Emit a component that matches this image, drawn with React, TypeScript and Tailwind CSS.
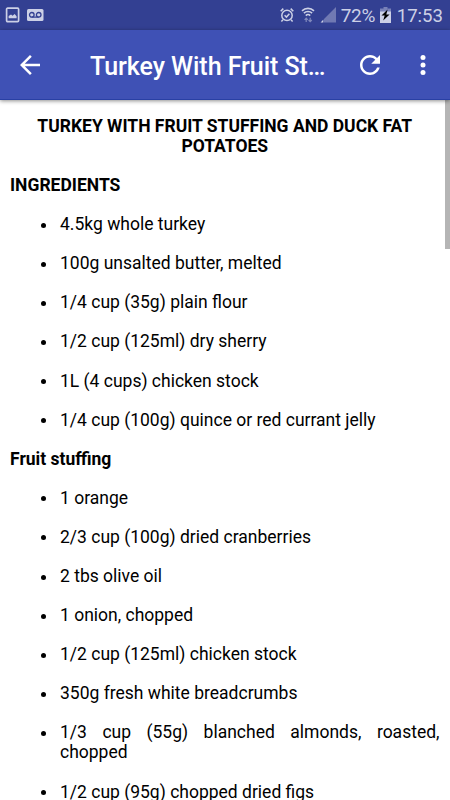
import React from 'react';

const ingredients = [
  '4.5kg whole turkey',
  '100g unsalted butter, melted',
  '1/4 cup (35g) plain flour',
  '1/2 cup (125ml) dry sherry',
  '1L (4 cups) chicken stock',
  '1/4 cup (100g) quince or red currant jelly',
];

const stuffing = [
  '1 orange',
  '2/3 cup (100g) dried cranberries',
  '2 tbs olive oil',
  '1 onion, chopped',
  '1/2 cup (125ml) chicken stock',
  '350g fresh white breadcrumbs',
  '1/3 cup (55g) blanched almonds, roasted, chopped',
  '1/2 cup (95g) chopped dried figs',
];

const StatusBar: React.FC = () => (
  <div className="h-[30px] shrink-0 bg-[#334092] flex items-center pl-[5px] pr-[7px] text-[#ccd0e6]">
    <svg className="h-4 w-[15px]" viewBox="0 0 15 16" fill="none">
      <rect x="1.6" y="1.2" width="12" height="13.4" rx="1" stroke="currentColor" strokeWidth="1.7" />
      <path d="M3.6 11.3V9L6 7.5l1.6 1.2L9.6 7l2 2.2v2.1z" fill="currentColor" />
    </svg>
    <svg className="ml-[6px] h-3 w-[18px]" viewBox="0 0 18 12" fill="none">
      <rect x="1" y="0" width="16.5" height="12" rx="1.5" fill="currentColor" />
      <g stroke="#334092" strokeWidth="1.3">
        <circle cx="5.8" cy="5.8" r="2.3" />
        <circle cx="12.7" cy="5.8" r="2.3" />
        <path d="M5.8 8.1h6.9" />
      </g>
    </svg>
    <div className="flex-1" />
    <svg className="h-4 w-4" viewBox="0 0 16 16" fill="none" stroke="currentColor" strokeWidth="1.5">
      <circle cx="8" cy="8.4" r="5.2" />
      <path d="M1.7 4.2 4.3 1.6M14.3 4.2 11.7 1.6M4 12.8 2.4 14.6M12 12.8l1.6 1.8M5.6 8.3l1.8 1.8 3-3.4" />
    </svg>
    <svg className="ml-[6px] h-4 w-[14px]" viewBox="0 0 14 16" fill="none" stroke="currentColor" strokeWidth="1.6">
      <path d="M1 3.8c3.4-3.2 8.6-3.2 12 0M2.9 6.2c2.3-2.2 5.9-2.2 8.2 0M4.8 8.6c1.2-1.2 3.2-1.2 4.4 0" />
      <g opacity=".5" strokeWidth="1.2">
        <path d="M5.2 15v-3.8M3.6 12.9l1.6-1.7 1.6 1.7" />
        <path d="M9.2 10.8v3.8M7.6 13l1.6 1.7 1.6-1.7" />
      </g>
    </svg>
    <svg className="ml-[5px] h-4 w-4" viewBox="0 0 16 16" fill="currentColor">
      <path d="M16 0v15.5H4V12z" opacity=".4" />
      <path d="M3.4 12.6v2.9H.6z" />
    </svg>
    <span className="ml-[5px] w-[36px] whitespace-nowrap text-[19px] leading-[30px] tracking-[-0.3px] pt-[2px]">72%</span>
    <svg className="ml-[3px] h-4 w-[11px]" viewBox="0 0 11 16">
      <path d="M3.5 0h4v1.5H11V5H0V1.5h3.5z" fill="currentColor" opacity=".45" />
      <path d="M0 4.5h11V16H0z" fill="currentColor" />
      <path d="M7.6 2.4 1.5 8.4h3.2L3.2 13.6 9.6 7.4H6.3z" fill="#000" />
    </svg>
    <span className="ml-[6px] whitespace-nowrap text-[18.6px] leading-[30px] pt-[2px]">17:53</span>
  </div>
);

const AppBar: React.FC = () => (
  <header className="relative z-10 h-[70px] shrink-0 bg-[#3f51b5] border-b border-[#2940a4] shadow-[0_1px_4px_rgba(0,0,0,0.45)] flex items-center text-white">
    <svg className="ml-[15px] h-[30px] w-[30px]" viewBox="0 0 24 24" fill="currentColor">
      <path d="M20 11H7.83l5.59-5.59L12 4l-8 8 8 8 1.41-1.41L7.83 13H20v-2z" />
    </svg>
    <h1 className="ml-[45px] w-[265px] whitespace-nowrap text-[25px] leading-[30px] font-medium tracking-[-0.05px] pt-[5px]">
      Turkey With Fruit St…
    </h1>
    <svg className="h-[30px] w-[30px]" viewBox="0 0 24 24" fill="currentColor">
      <path d="M17.65 6.35C16.2 4.9 14.21 4 12 4c-4.42 0-7.99 3.58-7.99 8s3.57 8 7.99 8c3.73 0 6.84-2.55 7.73-6h-2.08c-.82 2.33-3.04 4-5.65 4-3.31 0-6-2.69-6-6s2.69-6 6-6c1.66 0 3.14.69 4.22 1.78L13 11h7V4l-2.35 2.35z" />
    </svg>
    <svg className="ml-[22.5px] h-[30px] w-[30px]" viewBox="0 0 24 24" fill="currentColor">
      <circle cx="12" cy="6" r="2" />
      <circle cx="12" cy="12" r="2" />
      <circle cx="12" cy="18" r="2" />
    </svg>
  </header>
);

const ItemList: React.FC<{ items: string[] }> = ({ items }) => (
  <ul className="mt-[19.1px] flex flex-col gap-[19.1px] pl-[50px] text-justify">
    {items.map((item) => (
      <li key={item} className="flex">
        <span className="-ml-[19px] mt-[8.5px] mr-[14px] h-[5px] w-[5px] shrink-0 rounded-full bg-black" />
        <span className="flex-1">{item}</span>
      </li>
    ))}
  </ul>
);

export default function App() {
  return (
    <div className="h-[800px] w-[450px] overflow-hidden bg-white flex flex-col font-['Roboto',sans-serif]">
      <StatusBar />
      <AppBar />
      <main className="flex flex-1 min-h-0 overflow-hidden">
        <div className="w-[445px] shrink-0 pl-[10px] pr-[5.5px] pt-[16px] text-[17.5px] leading-[20px] text-black">
          <h2 className="text-center font-bold">TURKEY WITH FRUIT STUFFING AND DUCK FAT POTATOES</h2>
          <h3 className="mt-[19.1px] font-bold">INGREDIENTS</h3>
          <ItemList items={ingredients} />
          <h3 className="mt-[19.1px] font-bold">Fruit stuffing</h3>
          <ItemList items={stuffing} />
        </div>
        <div className="h-[149px] w-[5px] bg-[#b5b5b5]" />
      </main>
    </div>
  );
}
